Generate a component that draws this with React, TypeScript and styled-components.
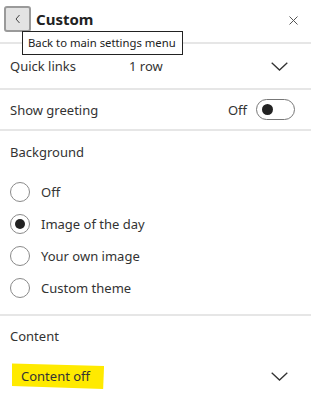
import React from "react";
import styled, { createGlobalStyle } from "styled-components";

const GlobalStyle = createGlobalStyle`
  html, body {
    margin: 0;
    padding: 0;
    background: #fff;
  }
  body {
    font-family: "Noto Sans", "Open Sans", sans-serif;
    color: #333;
  }
`;

const Panel = styled.div`
  position: relative;
  width: 311px;
  height: 402px;
  overflow: hidden;
  background: #fff;
`;

const Header = styled.div`
  display: flex;
  align-items: center;
  height: 42px;
  padding: 0 0 0 4px;
  box-sizing: border-box;
  position: relative;
`;

const BackButton = styled.button`
  width: 27px;
  height: 26px;
  margin-top: -5px;
  box-sizing: border-box;
  border: 2px solid #9a9a9a;
  border-radius: 3px;
  background: #e3e3e3;
  display: flex;
  align-items: center;
  justify-content: center;
  padding: 0;
`;

const Title = styled.h1`
  margin: -5px 0 0 5px;
  font-size: 15px;
  font-weight: 700;
  color: #222;
`;

const Close = styled.div`
  position: absolute;
  right: 13px;
  top: 8px;
`;

const Tooltip = styled.div`
  position: absolute;
  left: 22px;
  top: 31px;
  height: 24px;
  box-sizing: border-box;
  padding: 0 6px 0 5px;
  border: 1px solid #222;
  background: #fff;
  font-size: 11.3px;
  line-height: 22px;
  color: #222;
  white-space: nowrap;
  z-index: 2;
`;

const Divider = styled.div`
  height: 2px;
  background: #e6e6e6;
`;

const Row = styled.div<{ h: number }>`
  display: flex;
  align-items: center;
  height: ${({ h }) => h}px;
  padding: 0 16px 0 10px;
  font-size: 13px;
  color: #333;
`;

const Label = styled.span<{ w?: number }>`
  ${({ w }) => (w ? `width: ${w}px;` : "flex: 1;")}
`;

const Value = styled.span`
  flex: 1;
`;

const SectionTitle = styled.div<{ h: number }>`
  height: ${({ h }) => h}px;
  display: flex;
  align-items: center;
  padding-left: 10px;
  font-size: 13px;
  color: #333;
`;

const Toggle = styled.div`
  width: 39px;
  height: 21px;
  box-sizing: border-box;
  border: 1px solid #777;
  border-radius: 11px;
  margin-left: 9px;
  display: flex;
  align-items: center;
  padding-left: 5px;
`;

const Knob = styled.div`
  width: 11px;
  height: 11px;
  border-radius: 50%;
  background: #222;
`;

const RadioList = styled.div`
  display: flex;
  flex-direction: column;
  padding: 4px 0 10px 10px;
`;

const RadioRow = styled.label`
  display: flex;
  align-items: center;
  height: 32px;
  font-size: 13px;
  color: #333;
`;

const RadioCircle = styled.span<{ checked?: boolean }>`
  width: 20px;
  height: 20px;
  box-sizing: border-box;
  border: 1px solid #8a8a8a;
  border-radius: 50%;
  margin-right: 11px;
  display: flex;
  align-items: center;
  justify-content: center;
  &::after {
    content: "";
    display: ${({ checked }) => (checked ? "block" : "none")};
    width: 10px;
    height: 10px;
    border-radius: 50%;
    background: #222;
  }
`;

const Highlight = styled.span`
  position: relative;
  margin-left: 2px;
  padding: 0 14px 0 9px;
  &::before {
    content: "";
    position: absolute;
    left: 0;
    right: 0;
    top: -4px;
    bottom: -4px;
    background: #ffea00;
    clip-path: polygon(0 2%, 100% 12%, 99% 100%, 0 88%);
    z-index: 0;
  }
  & > span {
    position: relative;
  }
`;

const ChevronBox = styled.span`
  display: flex;
  margin-right: 7px;
`;

const Chevron = () => (
  <ChevronBox>
    <svg width="17" height="9" viewBox="0 0 17 9">
      <path d="M0.7 0.7 L8.5 8 L16.3 0.7" fill="none" stroke="#333" strokeWidth="1.3" />
    </svg>
  </ChevronBox>
);

const options = ["Off", "Image of the day", "Your own image", "Custom theme"];

export default function App() {
  return (
    <>
      <GlobalStyle />
      <Panel>
        <Header>
          <BackButton aria-label="Back">
            <svg width="8" height="10" viewBox="0 0 8 10">
              <path d="M5.5 1 L2 5 L5.5 9" fill="none" stroke="#444" strokeWidth="1" />
            </svg>
          </BackButton>
          <Title>Custom</Title>
          <Close>
            <svg width="9" height="9" viewBox="0 0 9 9">
              <path d="M0.5 0.5 L8.5 8.5 M8.5 0.5 L0.5 8.5" stroke="#555" strokeWidth="1" />
            </svg>
          </Close>
        </Header>
        <Tooltip>Back to main settings menu</Tooltip>
        <Divider />
        <Row h={44}>
          <Label w={119}>Quick links</Label>
          <Value>1 row</Value>
          <Chevron />
        </Row>
        <Divider />
        <Row h={39}>
          <Label>Show greeting</Label>
          <span>Off</span>
          <Toggle>
            <Knob />
          </Toggle>
        </Row>
        <Divider />
        <SectionTitle h={41}>Background</SectionTitle>
        <RadioList>
          {options.map((o) => (
            <RadioRow key={o}>
              <RadioCircle checked={o === "Image of the day"} />
              {o}
            </RadioRow>
          ))}
        </RadioList>
        <Divider />
        <SectionTitle h={40}>Content</SectionTitle>
        <Row h={40}>
          <Label>
            <Highlight>
              <span>Content off</span>
            </Highlight>
          </Label>
          <Chevron />
        </Row>
      </Panel>
    </>
  );
}
